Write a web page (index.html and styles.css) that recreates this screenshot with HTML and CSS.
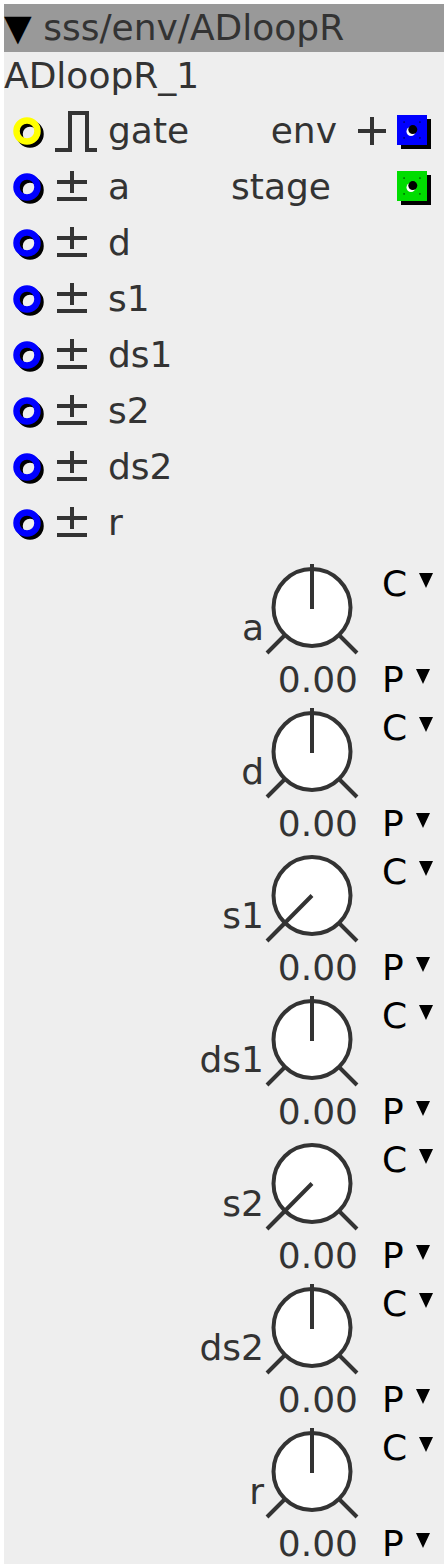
FILE: index.html
```html
<!DOCTYPE html>
<html lang="en">
<head>
    <meta charset="UTF-8">
    <meta name="viewport" content="width=device-width, initial-scale=1.0">
    <title>sss/env/ADloopR</title>
    <link rel="stylesheet" href="styles.css">
</head>
<body>
    <!-- shared drawings for jacks and knobs -->
    <svg class="defs" width="0" height="0" aria-hidden="true">
        <defs>
            <symbol id="ring" viewBox="0 0 40 40">
                <circle cx="23" cy="23" r="10.5" fill="none" stroke="#000" stroke-width="6.5"/>
                <circle cx="20" cy="20" r="10.5" fill="none" stroke="currentColor" stroke-width="6.5"/>
            </symbol>
            <symbol id="square" viewBox="0 0 36 36">
                <rect x="6" y="6" width="30" height="30" fill="#000"/>
                <rect x="2" y="2" width="30" height="30" fill="currentColor"/>
                <rect x="9" y="9" width="16" height="16" fill="none" stroke="#000" stroke-opacity="0.45" stroke-width="1.5" stroke-dasharray="2 14" stroke-dashoffset="1"/>
                <circle cx="16" cy="18.5" r="4.5" fill="#fff"/>
                <circle cx="17.8" cy="16.6" r="4.5" fill="#000"/>
            </symbol>
            <symbol id="pulse" viewBox="0 0 44 44">
                <path d="M1 41 H16 V4 H33 V41 H43" fill="none" stroke="#333" stroke-width="4"/>
            </symbol>
            <symbol id="bipolar" viewBox="0 0 44 44">
                <path d="M3 17 H33 M18 6 V28 M3 34 H33" fill="none" stroke="#333" stroke-width="4"/>
            </symbol>
            <symbol id="plus" viewBox="0 0 30 30">
                <path d="M1 15 H29 M15 1 V29" fill="none" stroke="#333" stroke-width="4"/>
            </symbol>
            <symbol id="knob-mid" viewBox="0 0 96 100">
                <circle cx="48" cy="47.5" r="38.5" fill="#fff" stroke="#333" stroke-width="4"/>
                <path d="M3 93 L20 76 M76 76 L93 93 M48 49 V4" fill="none" stroke="#333" stroke-width="4"/>
            </symbol>
            <symbol id="knob-min" viewBox="0 0 96 100">
                <circle cx="48" cy="47.5" r="38.5" fill="#fff" stroke="#333" stroke-width="4"/>
                <path d="M3 93 L20 76 M76 76 L93 93 M48 47.5 L3 93" fill="none" stroke="#333" stroke-width="4"/>
            </symbol>
        </defs>
    </svg>

    <div class="module">
        <div class="module-head"><span class="head-arrow">▼</span> sss/env/ADloopR</div>
        <div class="module-name">ADloopR_1</div>

        <div class="io">
            <div class="inlets">
                <div class="port inlet">
                    <svg class="jack gate"><use href="#ring"/></svg>
                    <svg class="type"><use href="#pulse"/></svg>
                    <span class="pname">gate</span>
                </div>
                <div class="port inlet">
                    <svg class="jack"><use href="#ring"/></svg>
                    <svg class="type"><use href="#bipolar"/></svg>
                    <span class="pname">a</span>
                </div>
                <div class="port inlet">
                    <svg class="jack"><use href="#ring"/></svg>
                    <svg class="type"><use href="#bipolar"/></svg>
                    <span class="pname">d</span>
                </div>
                <div class="port inlet">
                    <svg class="jack"><use href="#ring"/></svg>
                    <svg class="type"><use href="#bipolar"/></svg>
                    <span class="pname">s1</span>
                </div>
                <div class="port inlet">
                    <svg class="jack"><use href="#ring"/></svg>
                    <svg class="type"><use href="#bipolar"/></svg>
                    <span class="pname">ds1</span>
                </div>
                <div class="port inlet">
                    <svg class="jack"><use href="#ring"/></svg>
                    <svg class="type"><use href="#bipolar"/></svg>
                    <span class="pname">s2</span>
                </div>
                <div class="port inlet">
                    <svg class="jack"><use href="#ring"/></svg>
                    <svg class="type"><use href="#bipolar"/></svg>
                    <span class="pname">ds2</span>
                </div>
                <div class="port inlet">
                    <svg class="jack"><use href="#ring"/></svg>
                    <svg class="type"><use href="#bipolar"/></svg>
                    <span class="pname">r</span>
                </div>
            </div>

            <div class="outlets">
                <div class="port outlet">
                    <span class="pname">env</span>
                    <span class="type"><svg class="plus"><use href="#plus"/></svg></span>
                    <svg class="jack frac"><use href="#square"/></svg>
                </div>
                <div class="port outlet">
                    <span class="pname">stage</span>
                    <span class="type blank"></span>
                    <svg class="jack int"><use href="#square"/></svg>
                </div>
            </div>
        </div>

        <div class="params">
            <div class="param">
                <div class="dial">
                    <div class="dial-top">
                        <span class="plabel">a</span>
                        <svg class="knob"><use href="#knob-mid"/></svg>
                    </div>
                    <div class="pvalue">0.00</div>
                </div>
                <div class="sel">
                    <div class="sel-opt">C<span class="sel-arrow"></span></div>
                    <div class="sel-opt">P<span class="sel-arrow"></span></div>
                </div>
            </div>
            <div class="param">
                <div class="dial">
                    <div class="dial-top">
                        <span class="plabel">d</span>
                        <svg class="knob"><use href="#knob-mid"/></svg>
                    </div>
                    <div class="pvalue">0.00</div>
                </div>
                <div class="sel">
                    <div class="sel-opt">C<span class="sel-arrow"></span></div>
                    <div class="sel-opt">P<span class="sel-arrow"></span></div>
                </div>
            </div>
            <div class="param">
                <div class="dial">
                    <div class="dial-top">
                        <span class="plabel">s1</span>
                        <svg class="knob"><use href="#knob-min"/></svg>
                    </div>
                    <div class="pvalue">0.00</div>
                </div>
                <div class="sel">
                    <div class="sel-opt">C<span class="sel-arrow"></span></div>
                    <div class="sel-opt">P<span class="sel-arrow"></span></div>
                </div>
            </div>
            <div class="param">
                <div class="dial">
                    <div class="dial-top">
                        <span class="plabel">ds1</span>
                        <svg class="knob"><use href="#knob-mid"/></svg>
                    </div>
                    <div class="pvalue">0.00</div>
                </div>
                <div class="sel">
                    <div class="sel-opt">C<span class="sel-arrow"></span></div>
                    <div class="sel-opt">P<span class="sel-arrow"></span></div>
                </div>
            </div>
            <div class="param">
                <div class="dial">
                    <div class="dial-top">
                        <span class="plabel">s2</span>
                        <svg class="knob"><use href="#knob-min"/></svg>
                    </div>
                    <div class="pvalue">0.00</div>
                </div>
                <div class="sel">
                    <div class="sel-opt">C<span class="sel-arrow"></span></div>
                    <div class="sel-opt">P<span class="sel-arrow"></span></div>
                </div>
            </div>
            <div class="param">
                <div class="dial">
                    <div class="dial-top">
                        <span class="plabel">ds2</span>
                        <svg class="knob"><use href="#knob-mid"/></svg>
                    </div>
                    <div class="pvalue">0.00</div>
                </div>
                <div class="sel">
                    <div class="sel-opt">C<span class="sel-arrow"></span></div>
                    <div class="sel-opt">P<span class="sel-arrow"></span></div>
                </div>
            </div>
            <div class="param">
                <div class="dial">
                    <div class="dial-top">
                        <span class="plabel">r</span>
                        <svg class="knob"><use href="#knob-mid"/></svg>
                    </div>
                    <div class="pvalue">0.00</div>
                </div>
                <div class="sel">
                    <div class="sel-opt">C<span class="sel-arrow"></span></div>
                    <div class="sel-opt">P<span class="sel-arrow"></span></div>
                </div>
            </div>
        </div>
    </div>
</body>
</html>
```

FILE: styles.css
```css
body {
    margin: 0;
    font-family: "DejaVu Sans", sans-serif;
    background-color: #fff;
}

.defs {
    position: absolute;
    width: 0;
    height: 0;
    overflow: hidden;
}

.module {
    width: 440px;
    margin: 4px;
    background-color: #eee;
    color: #333;
    font-size: 36px;
}

.module-head {
    height: 48px;
    line-height: 48px;
    background-color: #999;
    white-space: nowrap;
}

.head-arrow {
    color: #000;
}

.module-name {
    height: 48px;
    line-height: 48px;
}

/* inlets and outlets */
.io {
    display: flex;
    justify-content: space-between;
    padding-top: 3px;
}

.inlets, .outlets {
    display: flex;
    flex-direction: column;
}

.port {
    display: flex;
    align-items: center;
    height: 56px;
    line-height: 56px;
    white-space: nowrap;
}

.inlet .jack {
    width: 40px;
    height: 40px;
    margin-left: 3px;
    color: #00f;
}

.inlet .jack.gate {
    color: #ff0;
}

.inlet .type {
    width: 44px;
    height: 44px;
    margin-left: 7px;
}

.inlet .pname {
    margin-left: 10px;
}

.outlet {
    justify-content: flex-end;
    padding-right: 13px;
}

.outlet .pname {
    margin-right: 13px;
}

.outlet .type {
    display: flex;
    align-items: center;
    justify-content: center;
    width: 44px;
    height: 56px;
    margin-right: 1px;
}

.outlet .type.blank {
    width: 50px;
}

.plus {
    width: 30px;
    height: 30px;
}

.outlet .jack {
    width: 36px;
    height: 36px;
}

.jack.frac {
    color: #00f;
}

.jack.int {
    color: #0d0;
}

/* parameters */
.params {
    display: flex;
    flex-direction: column;
    gap: 4px;
    margin-top: 9px;
}

.param {
    display: flex;
    justify-content: flex-end;
    height: 140px;
}

.dial {
    display: flex;
    flex-direction: column;
    align-items: flex-end;
}

.dial-top {
    display: flex;
    height: 100px;
}

.plabel {
    height: 40px;
    margin-top: 48px;
    line-height: 40px;
}

.knob {
    display: block;
    width: 96px;
    height: 100px;
}

.pvalue {
    margin-right: 2px;
    line-height: 40px;
}

.sel {
    display: flex;
    flex-direction: column;
    gap: 56px;
    width: 62px;
    margin-left: 22px;
    padding-top: 4px;
    color: #000;
}

.sel-opt {
    display: flex;
    align-items: flex-start;
    line-height: 40px;
}

.sel-arrow {
    width: 0;
    height: 0;
    margin-top: 9px;
    margin-left: 12px;
    border-left: 7.5px solid transparent;
    border-right: 7.5px solid transparent;
    border-top: 15px solid #000;
}
```
